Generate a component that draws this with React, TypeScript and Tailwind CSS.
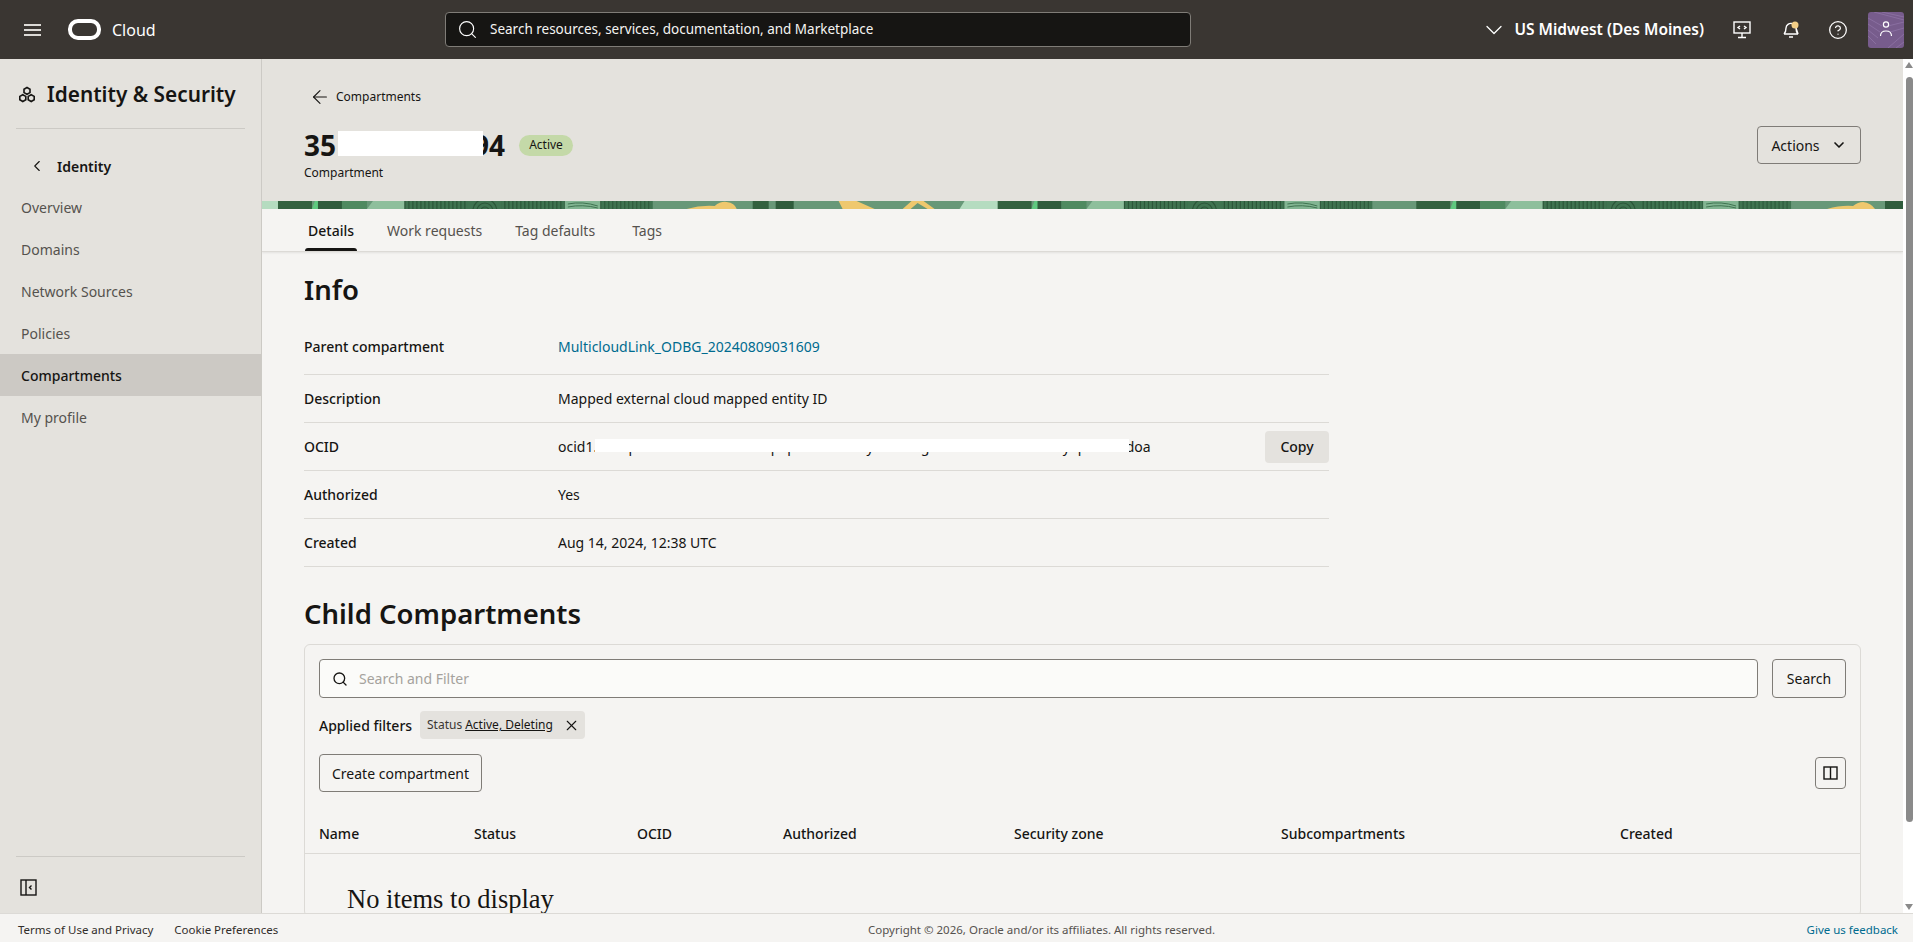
import { ArrowLeft, ChevronDown, ChevronLeft, CircleHelp, Search, X } from 'lucide-react'

const navItems = ['Overview', 'Domains', 'Network Sources', 'Policies', 'Compartments', 'My profile']
const tabs = ['Details', 'Work requests', 'Tag defaults', 'Tags']
const columns = [
  { label: 'Name', w: 'w-[155px]' },
  { label: 'Status', w: 'w-[163px]' },
  { label: 'OCID', w: 'w-[146px]' },
  { label: 'Authorized', w: 'w-[231px]' },
  { label: 'Security zone', w: 'w-[267px]' },
  { label: 'Subcompartments', w: 'w-[339px]' },
  { label: 'Created', w: 'w-[100px]' },
]

// one repeat of the artwork: dark block, green slash, then the fingerprint rings
function RingGroup({ d }: { d: number }) {
  const stripes = Array.from({ length: 42 }, (_, i) => d + 127 + i * 4)
  const lastStripes = Array.from({ length: 13 }, (_, i) => d + 323 + i * 4)
  return (
    <g>
      <rect x={d} width="34" height="8" fill="#33613f" />
      <polygon points={`${d + 34},8 ${d + 37},0 ${d + 43},0 ${d + 40},8`} fill="#5fc97f" />
      <rect x={d + 40} width="24" height="8" fill="#2f5c3c" />
      <rect x={d + 64} width="25" height="8" fill="#4f8a60" />
      <polygon points={`${d + 89},8 ${d + 95},0 ${d + 127},0 ${d + 127},8`} fill="#8ebf9c" />
      <rect x={d + 127} width="160" height="8" fill="#3f7350" />
      {stripes.map(x => (
        <path key={x} d={`M${x} 0v8`} stroke="#2c5639" strokeWidth="1.2" />
      ))}
      <rect x={d + 190} width="34" height="8" fill="#3f7350" />
      <g fill="none" stroke="#2c5639" strokeWidth="1.2">
        <circle cx={d + 207} cy="10" r="4" />
        <circle cx={d + 207} cy="10" r="8" />
        <circle cx={d + 207} cy="10" r="12" />
      </g>
      <rect x={d + 287} width="36" height="8" fill="#82b592" />
      <path d={`M${d + 290} 3q15-3 30 2M${d + 290} 6q15-3 30 1`} fill="none" stroke="#3f7350" />
      <rect x={d + 323} width="52" height="8" fill="#3f7350" />
      {lastStripes.map(x => (
        <path key={x} d={`M${x} 0v8`} stroke="#2c5639" strokeWidth="1" />
      ))}
    </g>
  )
}

// thin strip of decorative artwork above the tabs
function Banner() {
  return (
    <svg className="block w-full h-[8px]" viewBox="0 0 1642 8" preserveAspectRatio="none">
      <rect width="1642" height="8" fill="#689878" />
      <rect width="16" height="8" fill="#b5dcc0" />
      <RingGroup d={16} />
      <RingGroup d={736} />
      <RingGroup d={1155} />
      <path d="M425 8q14-4 28-3q6-5 12-4q8 1 10 7z" fill="#efc86e" />
      <rect x="491" width="16" height="8" fill="#33613f" />
      <rect x="514" width="18" height="8" fill="#2f5c3c" />
      <polygon points="577,0 595,0 613,8 581,8" fill="#efc86e" />
      <polygon points="641,8 650,0 662,0 673,8 666,8 656,2 649,8" fill="#efc86e" />
      <polygon points="698,8 703,0 736,0 736,8" fill="#b5dcc0" />
      <path d="M1566 8q14-4 26-3q5-4 10-4q8 1 12 7z" fill="#efc86e" />
      <rect x="1624" width="18" height="8" fill="#2f5c3c" />
    </svg>
  )
}

function GhostButton({ children, className }: { children: React.ReactNode; className: string }) {
  return (
    <button className={`flex items-center justify-center border border-[#7f7c77] rounded-[4px] text-[14px] text-[#161513] ${className}`}>
      {children}
    </button>
  )
}

export default function App() {
  return (
    <div className="h-[942px] w-[1913px] overflow-hidden flex flex-col bg-[#f5f4f2] text-[#161513] font-['Noto_Sans',sans-serif]">
      {/* Top bar */}
      <header className="h-[59px] shrink-0 bg-[#3a3632] flex items-center text-white">
        <div className="w-[445px] flex items-center shrink-0 pl-[24px]">
          <div className="w-[17px] flex flex-col gap-[3px]">
            <span className="h-[2px] bg-[#dcdad6]" />
            <span className="h-[2px] bg-[#dcdad6]" />
            <span className="h-[2px] bg-[#dcdad6]" />
          </div>
          <div className="ml-[27px] w-[33px] h-[21px] rounded-[10px] border-[4px] border-white" />
          <span className="ml-[11px] text-[16px]">Cloud</span>
        </div>
        <div className="w-[746px] h-[35px] flex items-center bg-[#161513] border border-[#7f7c77] rounded-[4px] pl-[11px]">
          <Search className="w-[21px] h-[21px] mr-[12px]" strokeWidth={1.3} />
          <span className="text-[13.5px] text-[#f5f4f2]">Search resources, services, documentation, and Marketplace</span>
        </div>
        <div className="flex-1 flex items-center justify-end pr-[9px]">
          <ChevronDown className="w-[28px] h-[28px] mr-[6px]" strokeWidth={1.1} />
          <span className="text-[15.5px] font-semibold mr-[29px]">US Midwest (Des Moines)</span>
          <svg className="w-[18px] h-[18px] mr-[31px]" viewBox="0 0 18 18" fill="none" stroke="white" strokeWidth="1.4">
            <rect x="1" y="1" width="16" height="11" />
            <path d="M9 12v4M5 16.5h8M7 5 5 6.5 7 8M11 5l2 1.5L11 8" />
          </svg>
          <svg className="w-[18px] h-[18px] mr-[28px]" viewBox="0 0 18 18" fill="none" stroke="white" strokeWidth="1.4">
            <path d="M2 13c2-2 2-3 2-6a5 5 0 0 1 6-4.5M14 7c0 3 0 4 2 6ZM2 13h14M7 16h4" />
            <circle cx="13" cy="4" r="3.5" fill="#f3cf87" stroke="none" />
          </svg>
          <CircleHelp className="w-[20px] h-[20px] mr-[20px]" strokeWidth={1.5} />
          <svg className="w-[36px] h-[36px] rounded-[3px]" viewBox="0 0 36 36" fill="none">
            <rect width="36" height="36" fill="#775c8c" />
            <path d="M0 6 14 14M0 12 12 20M0 18 10 26M0 24 8 32M6 0 36 8M14 0 36 5M20 14 36 10M22 20 36 16M20 36 36 22M28 36 36 30" stroke="#8a6fa0" strokeWidth="1" />
            <circle cx="18" cy="12.5" r="2.6" stroke="white" strokeWidth="1.2" />
            <path d="M12.5 24c0-3.5 2.5-5 5.5-5s5.5 1.5 5.5 5" stroke="white" strokeWidth="1.2" />
          </svg>
        </div>
      </header>

      <div className="flex-1 flex min-h-0">
        {/* Sidebar */}
        <aside className="w-[262px] shrink-0 bg-[#e4e2dd] border-r border-[#cccac5] flex flex-col">
          <div className="mx-[16px] h-[70px] flex items-center border-b border-[#cccac5] pt-[2px]">
            <svg className="w-[18px] h-[18px] ml-[2px] mr-[11px]" viewBox="0 0 18 18" fill="none" stroke="#161513" strokeWidth="1.6">
              <path d="M9 1.5 12 3.2v3.4L9 8.3 6 6.6V3.2zM4.8 8.7l3 1.7v3.4l-3 1.7-3-1.7v-3.4zM13.2 8.7l3 1.7v3.4l-3 1.7-3-1.7v-3.4z" />
            </svg>
            <span className="text-[20.8px] font-semibold whitespace-nowrap">Identity &amp; Security</span>
          </div>
          <div className="h-[74px] flex items-center pl-[28px]">
            <ChevronLeft className="w-[18px] h-[18px] mr-[11px]" strokeWidth={1.5} />
            <span className="text-[14px] font-semibold">Identity</span>
          </div>
          <nav className="flex flex-col -mt-[17px]">
            {navItems.map(item => (
              <a
                key={item}
                className={`h-[42px] flex items-center pl-[21px] text-[14px] ${item === 'Compartments' ? 'bg-[#ccc9c4] font-medium text-[#161513]' : 'text-[#55524e]'}`}
              >
                {item}
              </a>
            ))}
          </nav>
          <div className="mt-auto mx-[16px] h-[57px] border-t border-[#cccac5] flex items-center pl-[4px] pt-[4px]">
            <svg className="w-[17px] h-[17px]" viewBox="0 0 17 17" fill="none" stroke="#161513" strokeWidth="1.4">
              <rect x="1" y="1" width="15" height="15" />
              <path d="M6 1v15M11.5 6.5 9.5 8.5l2 2" />
            </svg>
          </div>
        </aside>

        {/* Main column */}
        <main className="flex-1 min-w-0 flex">
          <div className="flex-1 min-w-0 overflow-hidden">
            <section className="h-[142px] bg-[#e4e2dd] pl-[42px] pr-[42px] flex flex-col">
              <div className="flex items-center h-[20px] mt-[28px] text-[12px] pl-[5px]">
                <ArrowLeft className="w-[22px] h-[22px] mr-[5px]" strokeWidth={1.2} />
                <span>Compartments</span>
              </div>
              <div className="flex items-start justify-between mt-[19px]">
                <div>
                  <div className="flex items-center h-[38px]">
                    <h1 className="text-[28px] font-bold w-[201px] flex relative">
                      35<span className="w-[145px] h-[25px] mt-[7px] bg-white absolute left-[34px]" />
                      <span className="ml-auto">94</span>
                    </h1>
                    <span className="ml-[14px] h-[21px] w-[54px] rounded-full bg-[#c4d9a8] flex items-center justify-center text-[12px]">Active</span>
                  </div>
                  <p className="text-[12px] mt-[1px] leading-[16px]">Compartment</p>
                </div>
                <GhostButton className="w-[104px] h-[38px] gap-[11px]">
                  Actions
                  <ChevronDown className="w-[16px] h-[16px]" strokeWidth={2.5} />
                </GhostButton>
              </div>
            </section>
            <Banner />

            <div className="h-[43px] flex pl-[43px] gap-[27px] border-b border-[#dcdad6] shadow-[0_1px_2px_rgba(0,0,0,0.08)]">
              {tabs.map(t => (
                <div key={t} className={`relative h-full flex items-center px-[3px] text-[14px] ${t === 'Details' ? 'text-[#161513] font-medium' : 'text-[#55524e]'} ${t === 'Tags' ? 'ml-[4px]' : ''}`}>
                  {t}
                  {t === 'Details' && <span className="absolute left-0 right-0 bottom-0 h-[3px] bg-[#161513] rounded-t-[3px]" />}
                </div>
              ))}
            </div>

            <div className="pl-[42px] pr-[43px]">
              <h2 className="text-[27.5px] font-semibold leading-[36px] mt-[20px]">Info</h2>
              <div className="w-[1025px] mt-[4px] text-[14px]">
                <div className="h-[63px] flex items-center border-b border-[#dcdad6] pt-[6px]">
                  <span className="w-[254px] font-medium">Parent compartment</span>
                  <a className="text-[#006b8f]">MulticloudLink_ODBG_20240809031609</a>
                </div>
                <div className="h-[48px] flex items-center border-b border-[#dcdad6]">
                  <span className="w-[254px] font-medium">Description</span>
                  <span>Mapped external cloud mapped entity ID</span>
                </div>
                <div className="h-[48px] flex items-center border-b border-[#dcdad6]">
                  <span className="w-[254px] font-medium">OCID</span>
                  <span className="relative whitespace-nowrap">
                    ocid1.aaaapaaaaaaaaaaaaaaaaapapaaaaaaaaayaaaaaagaaaaaaaaaaaaaaaaayapaaaaadoa
                    <span className="absolute left-[37px] top-[3px] w-[534px] h-[13px] bg-white" />
                  </span>
                  <button className="ml-auto w-[64px] h-[32px] rounded-[4px] bg-[#e4e2de] font-medium">Copy</button>
                </div>
                <div className="h-[48px] flex items-center border-b border-[#dcdad6]">
                  <span className="w-[254px] font-medium">Authorized</span>
                  <span>Yes</span>
                </div>
                <div className="h-[48px] flex items-center border-b border-[#dcdad6]">
                  <span className="w-[254px] font-medium">Created</span>
                  <span>Aug 14, 2024, 12:38 UTC</span>
                </div>
              </div>

              <h2 className="text-[27.5px] font-semibold leading-[36px] mt-[29px]">Child Compartments</h2>

              <div className="mt-[12px] w-[1557px] border border-[#dcdad6] rounded-[6px] pt-[14px]">
                <div className="px-[14px] flex gap-[14px]">
                  <div className="flex-1 h-[39px] flex items-center bg-[#fbfbf9] border border-[#7f7c77] rounded-[4px] pl-[12px]">
                    <Search className="w-[16px] h-[16px] mr-[11px]" strokeWidth={2} />
                    <span className="text-[14px] text-[#a5a29d]">Search and Filter</span>
                  </div>
                  <GhostButton className="w-[74px] h-[39px]">Search</GhostButton>
                </div>
                <div className="px-[14px] flex items-center mt-[13px] h-[28px]">
                  <span className="text-[14px] font-medium w-[101px]">Applied filters</span>
                  <div className="h-[28px] w-[165px] bg-[#e4e2de] rounded-[4px] flex items-center pl-[7px] text-[12px]">
                    <span className="text-[#3a3632]">Status</span>
                    <span className="ml-[3px] underline">Active, Deleting</span>
                    <X className="w-[17px] h-[17px] ml-[10px]" strokeWidth={1.6} />
                  </div>
                </div>
                <div className="px-[14px] flex items-center justify-between mt-[15px]">
                  <GhostButton className="w-[163px] h-[38px]">Create compartment</GhostButton>
                  <GhostButton className="w-[31px] h-[32px]">
                    <svg className="w-[15px] h-[14px]" viewBox="0 0 15 14" fill="none" stroke="#161513" strokeWidth="1.4">
                      <rect x="1" y="1" width="13" height="12" />
                      <path d="M7.5 1v12" />
                    </svg>
                  </GhostButton>
                </div>
                <div className="flex items-center h-[62px] pl-[14px] pt-[22px] border-b border-[#dcdad6] text-[14px] font-medium">
                  {columns.map(c => (
                    <span key={c.label} className={c.w}>{c.label}</span>
                  ))}
                </div>
                <p className="pl-[42px] pt-[28px] text-[26.5px] leading-[34px] font-['Liberation_Serif',serif]">No items to display</p>
              </div>
            </div>
          </div>

          {/* Scrollbar */}
          <div className="w-[10px] shrink-0 bg-white flex flex-col items-end pt-[3px]">
            <span className="w-0 h-0 mr-0 border-x-[4px] border-x-transparent border-b-[6px] border-b-[#8a8a8a]" />
            <span className="w-[7px] h-[745px] mt-[9px] rounded-[4px] bg-[#8a8a8a]" />
            <span className="mt-auto mb-[3px] w-0 h-0 border-x-[4px] border-x-transparent border-t-[6px] border-t-[#8a8a8a]" />
          </div>
        </main>
      </div>

      {/* Footer */}
      <footer className="h-[29px] shrink-0 border-t border-[#dcdad6] bg-[#f5f4f2] flex items-center justify-between pl-[18px] pr-[15px] pt-[3px] text-[11.5px] text-[#312d2a] relative">
        <div className="flex gap-[21px]">
          <span>Terms of Use and Privacy</span>
          <span>Cookie Preferences</span>
        </div>
        <span className="absolute left-[868px] text-[#55524e]">Copyright © 2026, Oracle and/or its affiliates. All rights reserved.</span>
        <span className="text-[#006b8f]">Give us feedback</span>
      </footer>
    </div>
  )
}
